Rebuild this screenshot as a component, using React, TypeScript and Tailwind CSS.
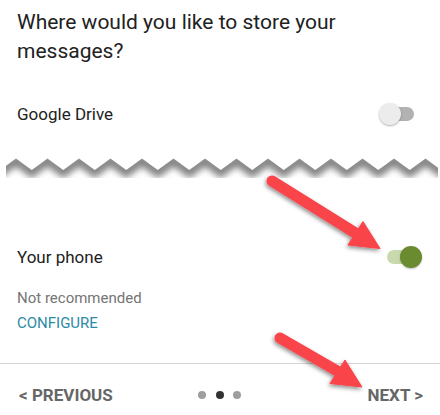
import React from "react";

const zig = (() => {
  const pts: string[] = [];
  for (let k = -1; k <= 14; k++) {
    const px = 16 + k * 31.5;
    pts.push(`${px},8.5`);
    pts.push(`${px + 15.75},20`);
  }
  return pts;
})();

function Toggle({ on }: { on: boolean }) {
  return (
    <div className="relative h-[22px] w-[43px]">
      <div className={on ? "absolute left-[8px] top-[4px] h-[14px] w-[27px] rounded-full bg-[#c9d9ae]" : "absolute left-[8px] top-[4px] h-[14px] w-[27px] rounded-full bg-[#b2b2b2]"} />
      <div className={on ? "absolute right-0 top-0 h-[22px] w-[22px] rounded-full bg-[#6a8b2f] shadow-[0_1px_2px_rgba(0,0,0,0.25)]" : "absolute left-0 top-0 h-[22px] w-[22px] rounded-full bg-[#ececec] shadow-[0_1px_2px_rgba(0,0,0,0.3)]"} />
    </div>
  );
}

// torn paper edge: sharp zigzag line with a soft shadow falling below it
function TornEdge() {
  return (
    <svg width="440" height="30" viewBox="0 0 440 30" className="block">
      <defs>
        <clipPath id="below">
          <polygon points={`${zig.join(" ")} 460,30 -20,30`} />
        </clipPath>
        <clipPath id="span">
          <rect x="6" y="0" width="432" height="30" />
        </clipPath>
        <filter id="soft" x="-10%" y="-50%" width="120%" height="200%">
          <feGaussianBlur stdDeviation="3" />
        </filter>
      </defs>
      <g clipPath="url(#span)">
        <g clipPath="url(#below)">
          <polyline points={zig.join(" ")} transform="translate(0,1.5)" fill="none" stroke="#858585" strokeWidth="11" filter="url(#soft)" />
        </g>
      </g>
    </svg>
  );
}

function Arrows() {
  return (
    <svg width="440" height="415" viewBox="0 0 440 415" className="pointer-events-none absolute left-0 top-0">
      <defs>
        <filter id="shade" x="-20%" y="-20%" width="140%" height="140%">
          <feDropShadow dx="-1" dy="2" stdDeviation="2" floodColor="#000" floodOpacity="0.45" />
        </filter>
      </defs>
      <g filter="url(#shade)" fill="#f9444a" stroke="#f9444a">
        <line x1="272" y1="181" x2="357" y2="234" strokeWidth="11" strokeLinecap="round" />
        <polygon points="363,221.5 380,248.5 348,245" strokeWidth="1" strokeLinejoin="round" />
        <line x1="280" y1="338" x2="339" y2="372" strokeWidth="11" strokeLinecap="round" />
        <polygon points="345,360 362,387 330,383.5" strokeWidth="1" strokeLinejoin="round" />
      </g>
    </svg>
  );
}

export default function App() {
  return (
    <div className="relative flex h-[415px] w-[440px] flex-col overflow-hidden bg-white font-['Roboto',sans-serif] text-[#212121]">
      <h1 className="px-[17px] pt-[8px] text-[21px] font-normal leading-[29px]">
        Where would you like to store your
        <br />
        messages?
      </h1>

      <div className="mt-[36px] flex h-[24px] items-center justify-between pl-[17px] pr-[18px]">
        <span className="text-[17px] leading-[20px]">Google Drive</span>
        <Toggle on={false} />
      </div>

      <div className="mt-[24px]">
        <TornEdge />
      </div>

      <div className="mt-[65px] flex h-[24px] items-center justify-between pl-[17px] pr-[18px]">
        <span className="text-[17px] leading-[20px]">Your phone</span>
        <Toggle on />
      </div>

      <p className="mt-[19px] px-[17px] text-[15px] leading-[20px] text-[#757575]">Not recommended</p>
      <button className="mt-[5px] self-start px-[17px] text-[15px] leading-[20px] text-[#2b8aa6]">CONFIGURE</button>

      <div className="mt-[30px] h-px bg-[#d6d6d6]" />

      <div className="mt-[21px] grid grid-cols-3 items-center px-[17px]">
        <span className="justify-self-start pl-[2px] text-[17px] font-bold leading-[20px] text-[#666]">&lt; PREVIOUS</span>
        <div className="flex items-center justify-self-center gap-[9.5px]">
          <span className="h-[8px] w-[8px] rounded-full bg-[#9e9e9e]" />
          <span className="h-[8px] w-[8px] rounded-full bg-[#333]" />
          <span className="h-[8px] w-[8px] rounded-full bg-[#9e9e9e]" />
        </div>
        <span className="justify-self-end text-[17px] font-bold leading-[20px] text-[#666]">NEXT &gt;</span>
      </div>

      <Arrows />
    </div>
  );
}
